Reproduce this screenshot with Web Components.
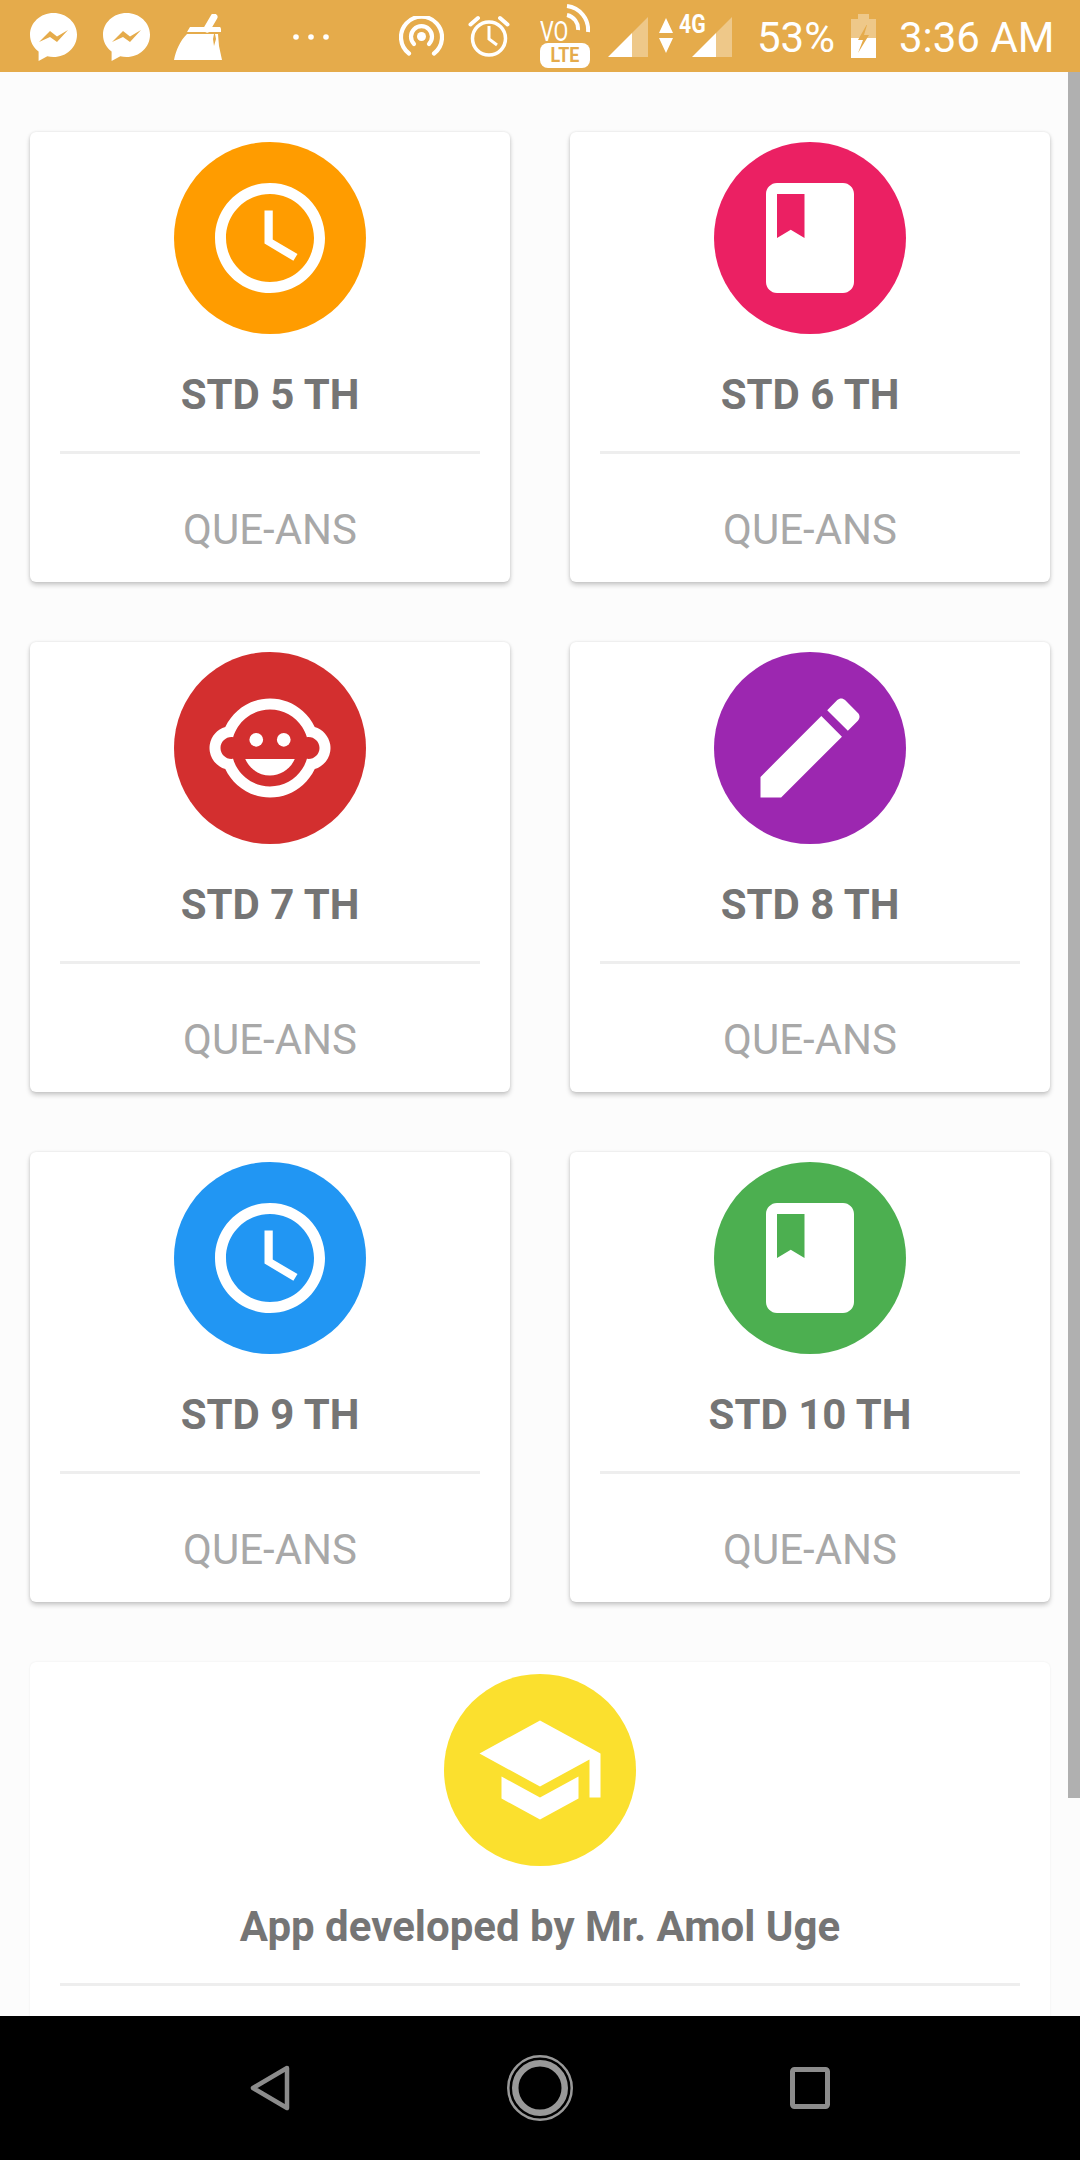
<!DOCTYPE html>
<html><head><meta charset="utf-8"><style>
html,body{margin:0;padding:0;background:#000;}
body{width:1080px;height:2160px;overflow:hidden;font-family:Roboto,"Liberation Sans",sans-serif;}
</style></head><body>
<app-screen>
<status-bar slot="status"></status-bar>
<std-card color="#ff9c00" icon="clock" title-text="STD 5 TH"></std-card>
<std-card color="#eb2063" icon="book" title-text="STD 6 TH"></std-card>
<std-card color="#d32f2f" icon="face" title-text="STD 7 TH"></std-card>
<std-card color="#9c27b0" icon="pencil" title-text="STD 8 TH"></std-card>
<std-card color="#2196f3" icon="clock" title-text="STD 9 TH"></std-card>
<std-card color="#4caf50" icon="book" title-text="STD 10 TH"></std-card>
<std-card slot="footer" wide color="#fbe02e" icon="school" title-text="App developed by Mr. Amol Uge"></std-card>
<nav-bar slot="nav"></nav-bar>
</app-screen>
<script>
const ICONS={
clock:'<path fill="#fff" d="M11.99 2C6.47 2 2 6.48 2 12s4.47 10 9.99 10C17.52 22 22 17.52 22 12S17.52 2 11.99 2zM12 20c-4.42 0-8-3.58-8-8s3.58-8 8-8 8 3.58 8 8-3.58 8-8 8z"/><path fill="#fff" d="M12.5 7H11v6l5.25 3.15.75-1.23-4.5-2.67z"/>',
book:'<path fill="#fff" d="M18 2H6c-1.1 0-2 .9-2 2v16c0 1.1.9 2 2 2h12c1.1 0 2-.9 2-2V4c0-1.1-.9-2-2-2zM6 4h5v8l-2.500-1.500L6 12V4z"/>',
face:'<circle fill="#fff" cx="14.500" cy="10.500" r="1.250"/><circle fill="#fff" cx="9.500" cy="10.500" r="1.250"/><path fill="#fff" d="M12 17c2.010 0 3.740-1.230 4.500-3h-9c.76 1.770 2.490 3 4.500 3z"/><path fill="#fff" d="M22.940 12.660c.04-.21.060-.43.060-.66s-.02-.450-.06-.66c-.25-1.510-1.360-2.740-2.810-3.170-.53-1.120-1.280-2.100-2.190-2.910C16.360 3.850 14.280 3 12 3s-4.360.85-5.940 2.260c-.92.810-1.670 1.800-2.190 2.910-1.450.43-2.560 1.650-2.810 3.170-.04.21-.06.43-.06.66s.02.450.06.66c.25 1.510 1.360 2.740 2.810 3.170.52 1.110 1.270 2.090 2.170 2.890C7.620 20.140 9.710 21 12 21s4.380-.86 5.970-2.280c.9-.8 1.650-1.790 2.170-2.890 1.440-.43 2.550-1.660 2.800-3.170zM19 14c-.1 0-.19-.02-.29-.030-.2.670-.49 1.290-.86 1.860C16.600 17.740 14.450 19 12 19s-4.600-1.260-5.850-3.170c-.37-.57-.66-1.190-.86-1.860-.1.010-.19.030-.29.030-1.100 0-2-.9-2-2s.9-2 2-2c.1 0 .19.020.29.030.2-.67.490-1.290.86-1.860C7.400 6.260 9.550 5 12 5s4.600 1.260 5.850 3.170c.37.57.66 1.190.86 1.860.1-.01.19-.030.29-.030 1.100 0 2 .9 2 2s-.9 2-2 2z"/>',
pencil:'<path fill="#fff" d="M3 17.250V21h3.750L17.810 9.940l-3.750-3.750L3 17.250zM20.710 7.040c.39-.39.39-1.020 0-1.410l-2.340-2.340c-.39-.39-1.020-.39-1.410 0l-1.830 1.830 3.750 3.750 1.830-1.830z"/>',
school:'<path fill="#fff" d="M5 13.180v4L12 21l7-3.820v-4L12 17l-7-3.820zM12 3L1 9l11 6 9-4.910V17h2V9L12 3z"/>'
};
function def(name,html,init){customElements.define(name,class extends HTMLElement{constructor(){super();this.attachShadow({mode:'open'}).innerHTML=html;}connectedCallback(){if(init)init(this);}});}

def('app-screen',`<style>
:host{display:flex;flex-direction:column;width:1080px;height:2160px;background:#fafafa;}
.main{position:relative;flex:1;min-height:0;overflow:hidden;padding:60px 30px 0;box-sizing:border-box;display:flex;flex-direction:column;gap:60px;background:#fcfcfc;}
.grid{display:grid;grid-template-columns:480px 480px;column-gap:60px;row-gap:60px;}
.bar{position:absolute;right:0;top:0;width:12px;height:1726px;background:#b0b0b0;}
</style>
<slot name="status"></slot>
<div class="main"><div class="grid"><slot></slot></div><slot name="footer"></slot><div class="bar"></div></div>
<slot name="nav"></slot>`);

def('std-card',`<style>
:host{display:block;box-sizing:border-box;height:450px;background:#fff;border-radius:6px;box-shadow:0 3px 5px rgba(0,0,0,.2),0 0 3px rgba(0,0,0,.1);padding:10px 30px 0;color:#757575;}
:host([wide]){height:auto;min-height:600px;padding-top:12px;box-shadow:0 0 2px rgba(0,0,0,.08);}
:host([wide]) p{display:none;}
.c{width:192px;height:192px;border-radius:50%;margin:0 auto;display:flex;align-items:center;justify-content:center;}
svg{width:132px;height:132px;display:block;}
h2{margin:0;padding-top:36px;font:700 42px/49px Roboto,"Liberation Sans",sans-serif;color:#757575;text-align:center;white-space:nowrap;}
hr{border:0;height:3px;background:#eee;margin:32px 0 0;}
p{margin:0;padding-top:51px;font:400 42px/49px Roboto,"Liberation Sans",sans-serif;color:#a8a8a8;text-align:center;}
</style><div class="c"><svg viewBox="0 0 24 24"></svg></div><h2></h2><hr><p>QUE-ANS</p>`,el=>{
 const s=el.shadowRoot;
 s.querySelector('.c').style.background=el.getAttribute('color');
 s.querySelector('svg').innerHTML=ICONS[el.getAttribute('icon')];
 s.querySelector('h2').textContent=el.getAttribute('title-text');
});

const BUBBLE=`<path fill="#fff" d="M23.500 0C10.500 0 0 9.700 0 21.700c0 6.800 3.300 12.800 8.600 16.800V48l8.700-4.800c2 .5 4 .8 6.200.8C36.500 44 47 34.300 47 21.700 47 9.700 36.500 0 23.500 0z"/><path fill="#e5ab4b" d="M9 29l11-11 7 5.500L38 17 27 29l-7-5z"/>`;
const SIG=`<path fill="#fff" d="M0 40L24 16v24z"/><path fill="#fff" opacity=".35" d="M24 16L40 0v40H24z"/>`;

def('status-bar',`<style>
:host{display:flex;align-items:flex-start;box-sizing:border-box;height:72px;background:#e5ab4b;color:#fff;font:400 42px/68px Roboto,"Liberation Sans",sans-serif;padding-left:30px;flex:none;white-space:nowrap;}
svg{display:block;flex:none;}
.vo{position:relative;flex:none;width:50px;height:65px;margin:3px 0 0 30px;display:flex;flex-direction:column;}
.vo b{display:block;box-sizing:border-box;height:40px;padding-top:19px;font:400 27px/20px Roboto,sans-serif;transform:scaleX(.8);transform-origin:left center;}
.vo i{display:block;height:25px;background:#fff;border-radius:8px;color:#e5ab4b;text-align:center;font:700 21px/25px Roboto,sans-serif;}
.vo i span{display:inline-block;transform:scaleX(.85);}
.vo svg{position:absolute;left:22px;top:0;}
.sg{position:relative;flex:none;width:40px;height:40px;margin:17px 0 0 19px;}
.sg b{position:absolute;left:-13px;top:-5px;font:700 25px/25px Roboto,sans-serif;transform:scaleX(.85);transform-origin:left center;}
.tx{margin:4px 0 0;}
</style>
<svg width="47" height="48" viewBox="0 0 47 48" style="margin-top:13px">${BUBBLE}</svg>
<svg width="47" height="48" viewBox="0 0 47 48" style="margin:13px 0 0 26px">${BUBBLE}</svg>
<svg width="48" height="47" viewBox="0 0 48 47" style="margin:14px 0 0 24px"><path d="M40 3l-7 12" stroke="#fff" stroke-width="7" stroke-linecap="round" fill="none"/><path fill="#fff" d="M16 13h29c2 0 2 1 2 5H13z"/><path fill="#fff" d="M13 20h27l-1 5 1 7 2-7-1-5h3l1 12 3 14H0c2-10 6-19 13-26z"/></svg>
<svg width="36" height="8" viewBox="0 0 36 8" style="margin:33px 0 0 71px"><circle fill="#fff" cx="3" cy="4" r="2.800"/><circle fill="#fff" cx="18" cy="4" r="2.800"/><circle fill="#fff" cx="33" cy="4" r="2.800"/></svg>
<svg width="45" height="41" viewBox="0 0 45 41" style="margin:16px 0 0 70px"><g fill="none" stroke="#fff" stroke-width="4.200" stroke-linecap="round"><path d="M10 37.500a20.500 20.500 0 1 1 25 0"/><path d="M15 28a10.500 10.500 0 1 1 15 0"/></g><circle fill="#fff" cx="22.500" cy="20.500" r="4.500"/></svg>
<svg width="42" height="42" viewBox="0 0 42 42" style="margin:15px 0 0 24px"><g fill="none" stroke="#fff"><circle cx="21" cy="23.500" r="16.500" stroke-width="3.500"/><path d="M21 11v13l8 6" stroke-width="3"/><path d="M2.500 9.500L10 3M32 3l7.500 6.500" stroke-width="4" stroke-linecap="round"/></g></svg>
<div class="vo"><b>VO</b><i><span>LTE</span></i><svg width="28" height="30" viewBox="0 0 28 30"><path d="M5 3a24 24 0 0 1 21 26M5 12a14 14 0 0 1 11 15" fill="none" stroke="#fff" stroke-width="4"/></svg></div>
<svg width="40" height="40" viewBox="0 0 40 40" style="margin:17px 0 0 18px">${SIG}</svg>
<svg width="14" height="35" viewBox="0 0 14 35" style="margin:18px 0 0 11px"><path fill="#fff" d="M7 0l7 15H0zM7 35l7-15H0z"/></svg>
<div class="sg"><svg width="40" height="40" viewBox="0 0 40 40">${SIG}</svg><b>4G</b></div>
<span class="tx" style="margin-left:25px">53%</span>
<svg width="25" height="44" viewBox="0 0 25 44" style="margin:14px 0 0 16px"><path fill="#fff" opacity=".35" d="M7 0h11v5h7v19H0V5h7z"/><path fill="#fff" d="M0 24h25v20H0z"/><path fill="#e5ab4b" d="M15.500 11L7 26h5l-5 13 11-18h-5l3-10z"/></svg>
<span class="tx" style="margin-left:23px">3:36 AM</span>`);

def('nav-bar',`<style>
:host{display:flex;align-items:center;box-sizing:border-box;height:144px;background:#000;flex:none;}
svg{display:block;}
.w{display:grid;grid-template-columns:270px 270px 270px;width:810px;margin:0 auto;justify-items:center;align-items:center;}
</style><div class="w">
<svg width="40" height="46" viewBox="0 0 40 46"><path d="M37 3L3 23l34 20z" fill="none" stroke="#8c8c8c" stroke-width="4.500" stroke-linejoin="round"/></svg>
<svg width="66" height="66" viewBox="0 0 66 66"><circle cx="33" cy="33" r="31.750" fill="none" stroke="#999" stroke-width="2.500"/><circle cx="33" cy="33" r="24.750" fill="none" stroke="#999" stroke-width="6.500"/></svg>
<svg width="40" height="42" viewBox="0 0 40 42"><rect x="2.500" y="2.500" width="35" height="37" rx="2" fill="none" stroke="#8c8c8c" stroke-width="5"/></svg>
</div>`);
</script>
</body></html>
